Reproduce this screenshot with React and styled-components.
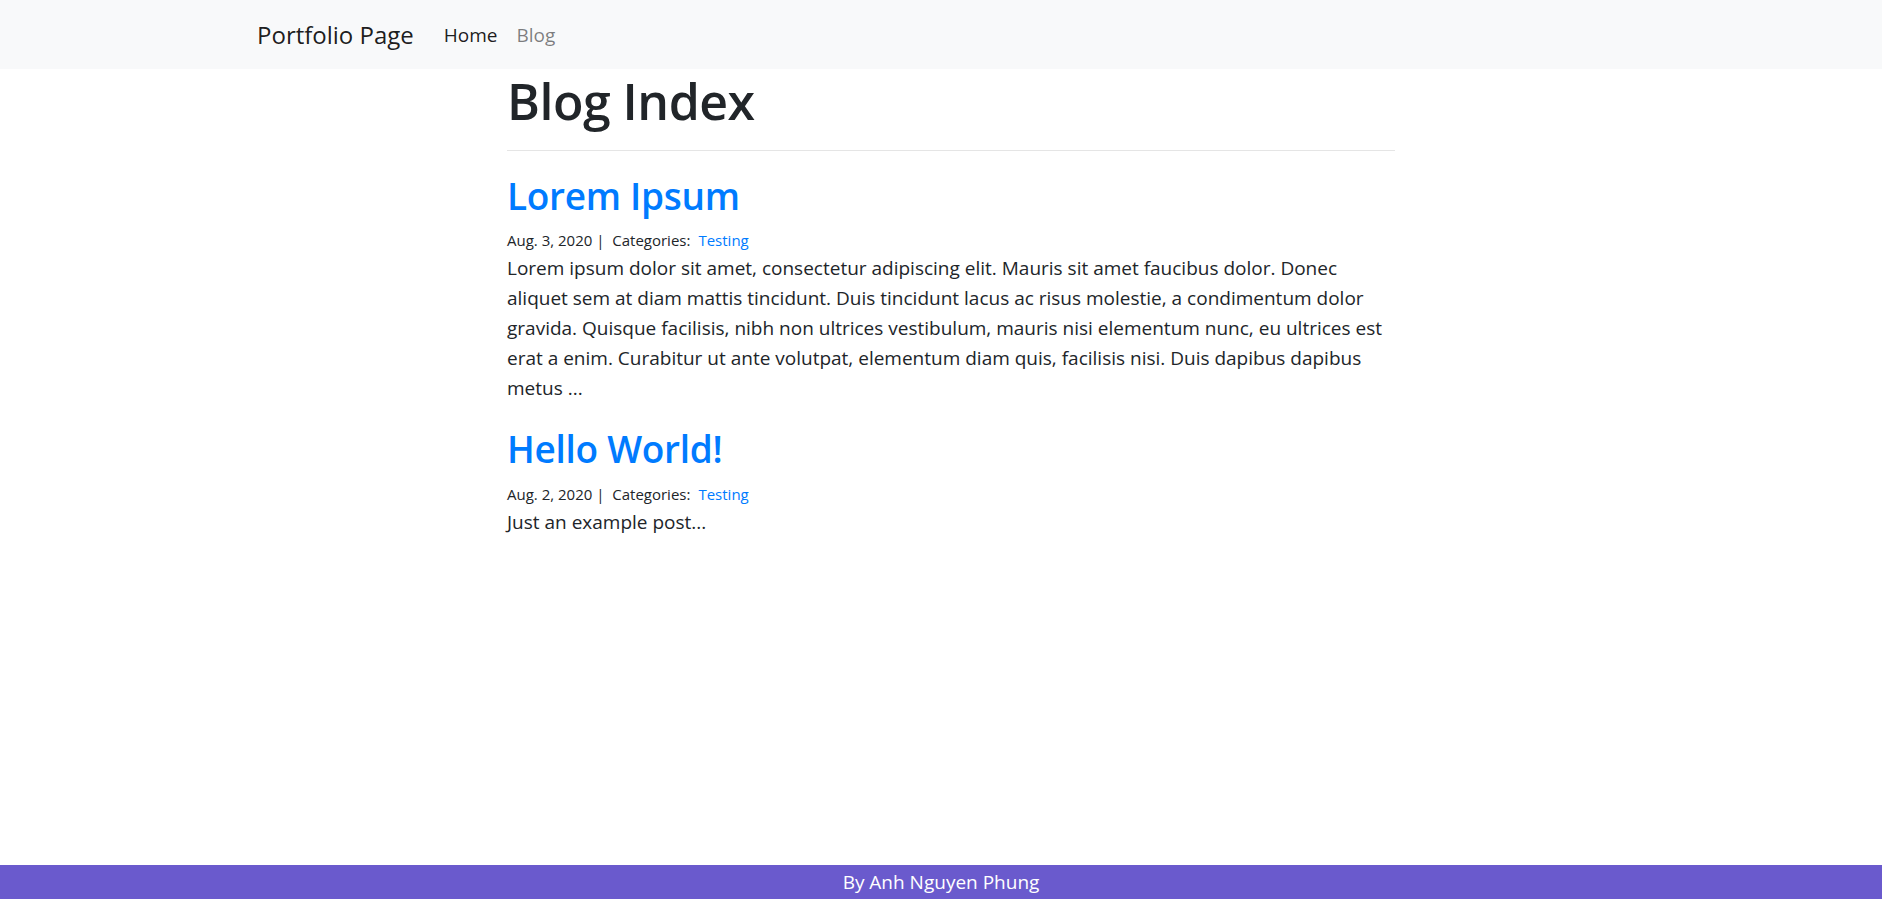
import React from "react";
import styled, { createGlobalStyle } from "styled-components";

const GlobalStyle = createGlobalStyle`
  html, body {
    margin: 0;
    padding: 0;
    height: 100%;
  }
  body {
    font-family: "Open Sans", "Noto Sans", sans-serif;
    color: #212529;
    background: #fff;
  }
  #root {
    min-height: 100%;
    display: flex;
    flex-direction: column;
  }
`;

const Navbar = styled.nav`
  background: #f8f9fa;
  height: 69px;
  display: flex;
  align-items: center;
  padding-left: 257px;
  box-sizing: border-box;
`;

const Brand = styled.a`
  font-size: 24px;
  color: rgba(0, 0, 0, 0.9);
  margin-right: 30px;
  text-decoration: none;
`;

const NavLink = styled.a`
  font-size: 19px;
  margin-right: 19px;
  text-decoration: none;
  color: ${(p) => (p.active ? "rgba(0, 0, 0, 0.9)" : "rgba(0, 0, 0, 0.5)")};
`;

const Main = styled.main`
  flex: 1;
  width: 888px;
  margin-left: 507px;
`;

const Title = styled.h1`
  font-size: 50px;
  font-weight: 600;
  line-height: 1.15;
  margin: 0;
  padding-top: 4px;
  letter-spacing: -0.5px;
`;

const Rule = styled.hr`
  border: 0;
  border-top: 1px solid rgba(0, 0, 0, 0.1);
  margin: 19px 0 23px;
`;

const Post = styled.article`
  margin-bottom: 24px;
`;

const PostTitle = styled.h2`
  font-size: 37px;
  font-weight: 600;
  line-height: 1.2;
  margin: 0 0 11px;
  color: #007bff;
  letter-spacing: -0.3px;
`;

const Meta = styled.div`
  font-size: 15px;
  line-height: 1.5;
  color: #212529;
  margin-bottom: 2px;
`;

const Category = styled.a`
  color: #007bff;
  text-decoration: none;
  margin-left: 8px;
`;

const Body = styled.p`
  font-size: 19px;
  line-height: 30px;
  margin: 0;
`;

const Footer = styled.footer`
  background: #6a5acd;
  color: #fff;
  height: 34px;
  display: flex;
  align-items: center;
  justify-content: center;
  font-size: 19px;
`;

const posts = [
  {
    title: "Lorem Ipsum",
    date: "Aug. 3, 2020",
    category: "Testing",
    body:
      "Lorem ipsum dolor sit amet, consectetur adipiscing elit. Mauris sit amet faucibus dolor. Donec aliquet sem at diam mattis tincidunt. Duis tincidunt lacus ac risus molestie, a condimentum dolor gravida. Quisque facilisis, nibh non ultrices vestibulum, mauris nisi elementum nunc, eu ultrices est erat a enim. Curabitur ut ante volutpat, elementum diam quis, facilisis nisi. Duis dapibus dapibus metus ...",
  },
  {
    title: "Hello World!",
    date: "Aug. 2, 2020",
    category: "Testing",
    body: "Just an example post...",
  },
];

export default function App() {
  return (
    <>
      <GlobalStyle />
      <Navbar>
        <Brand href="#">Portfolio Page</Brand>
        <NavLink href="#" active>
          Home
        </NavLink>
        <NavLink href="#">Blog</NavLink>
      </Navbar>
      <Main>
        <Title>Blog Index</Title>
        <Rule />
        {posts.map((post, i) => (
          <Post key={i}>
            <PostTitle>{post.title}</PostTitle>
            <Meta>
              {post.date} |&nbsp; Categories:
              <Category href="#">{post.category}</Category>
            </Meta>
            <Body>{post.body}</Body>
          </Post>
        ))}
      </Main>
      <Footer>By Anh Nguyen Phung</Footer>
    </>
  );
}
